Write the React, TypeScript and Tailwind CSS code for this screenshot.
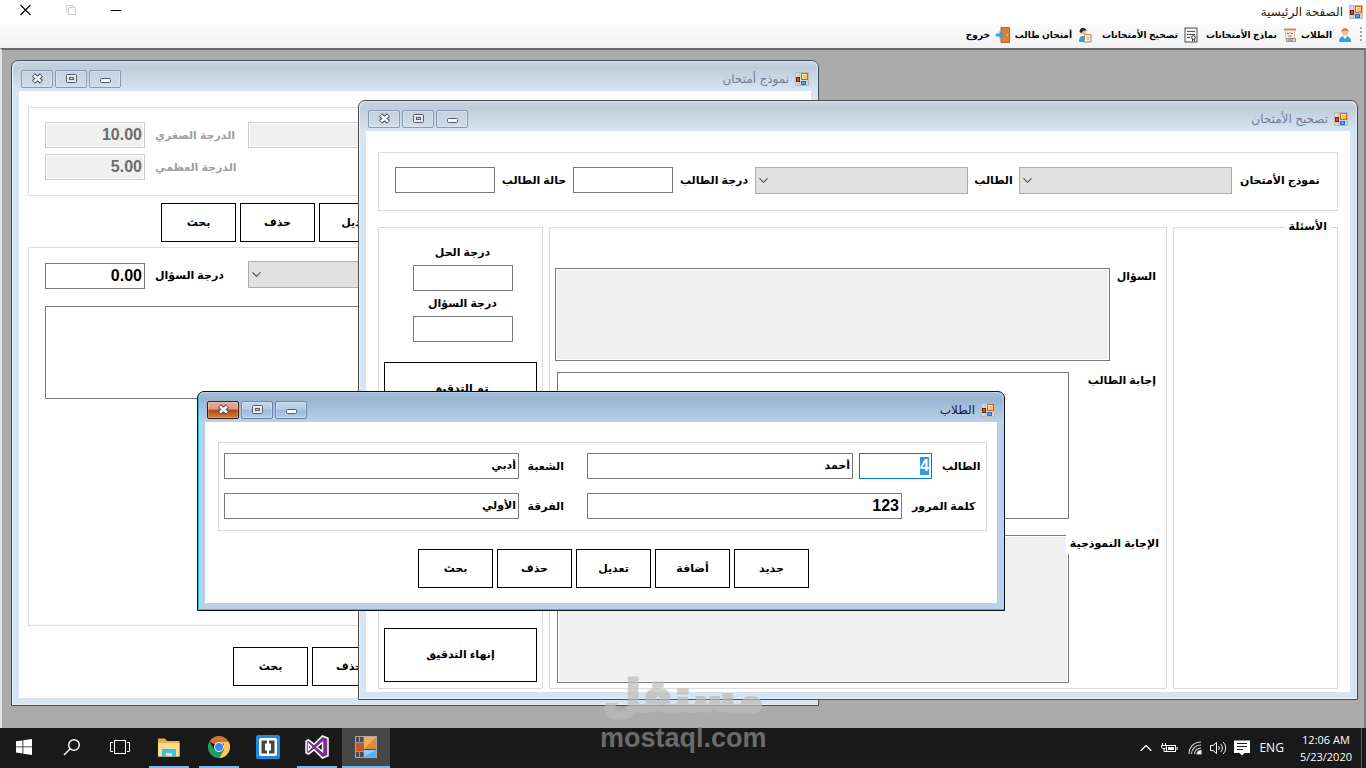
import { useEffect, useRef } from "react";
import type { ReactNode } from "react";
import { ChevronDown, ChevronUp } from "lucide-react";

const LABEL = "text-[11px] leading-4 font-bold whitespace-nowrap";
const BOX_BASE = "h-[26px] border px-[2px] text-base leading-5 font-bold outline-none";
const BOX = `${BOX_BASE} border-[#7a7a7a] bg-white`;
const DISABLED_BOX = `${BOX_BASE} border-[#ccc] bg-[#f0f0f0] text-[#6d6d6d] shadow-[inset_0_0_0_1px_#fff]`;
const ARABIC_BOX =
  "h-[26px] border border-[#7a7a7a] bg-white px-[2px] pb-[2px] text-[11px] leading-5 font-bold outline-none";
const AREA = "block resize-none border border-[#7a7a7a] outline-none";
const GREY_AREA = `${AREA} bg-[#f0f0f0] shadow-[inset_0_0_0_1px_#fff]`;

function FormIcon() {
  return (
    <svg width="14" height="14" viewBox="0 0 14 14" className="shrink-0" aria-hidden="true">
      <rect x="0.5" y="0.5" width="13" height="13" fill="#d3d6da" stroke="#bdb9b6" />
      <path d="M0.5 9.5h13M4.5 0.5v13" stroke="#bdbdbd" />
      <rect x="6.5" y="1.5" width="6" height="6" fill="#ffc04c" stroke="#c56a1c" />
      <path d="M7.5 6.5v-4h4" stroke="#ffe9ad" fill="none" />
      <rect x="1.5" y="5.5" width="3" height="4" fill="#d0502c" stroke="#7a1d0c" />
      <rect x="6.5" y="9.5" width="4" height="3" fill="#4ba6f2" stroke="#1b6fc4" />
    </svg>
  );
}

function CaptionButton({ kind, active }: { kind: "close" | "max" | "min"; active?: boolean }) {
  const names = { close: "إغلاق", max: "تكبير", min: "تصغير" };
  const look =
    kind === "close" && active
      ? "border-[#3c1f1a] bg-[linear-gradient(#e6aa98_0%,#dc9a84_45%,#a9480f_50%,#d8843a_100%)]"
      : active
        ? "border-[#6f84ad] bg-[linear-gradient(#c3d7ec_0%,#b4cce6_45%,#9cb8d8_50%,#b3cde8_100%)]"
        : "border-[#8c97b5] bg-[linear-gradient(#c5d1df,#d0dce9)]";
  return (
    <button
      type="button"
      aria-label={names[kind]}
      className={`flex h-[18px] w-8 items-center justify-center rounded-[2px] border shadow-[inset_0_0_0_1px_rgba(255,255,255,0.25)] ${look}`}
    >
      <svg width="13" height="11" viewBox="0 0 13 11" aria-hidden="true">
        {kind === "close" && (
          <>
            <path d="M2.500 2l8 7M10.500 2l-8 7" stroke="#4a5069" strokeWidth="4.600" />
            <path d="M3 2.500l7 6M10 2.500l-7 6" stroke="#fff" strokeWidth="2.400" />
          </>
        )}
        {kind === "max" && (
          <>
            <rect x="1.5" y="1.5" width="10" height="8" rx="1" fill="#e9e9e9" stroke="#555b6e" />
            <rect x="4.5" y="4.5" width="4" height="2" fill="#c9d5e3" stroke="#555b6e" />
          </>
        )}
        {kind === "min" && (
          <rect x="1.5" y="5.5" width="10" height="4" rx="1" fill="#fafafa" stroke="#555b6e" />
        )}
      </svg>
    </button>
  );
}

function MdiWindow({
  title,
  place,
  active,
  children,
}: {
  title: string;
  place: string;
  active?: boolean;
  children: ReactNode;
}) {
  const frame = active
    ? "border-[#111] bg-[#b9d1ea] shadow-[inset_1px_-1px_0_#2cc3e0]"
    : "border-[#4c4c4c] bg-[#d7e4f2] shadow-[inset_1px_-1px_0_#e9f1f9]";
  const bar = active
    ? "bg-[linear-gradient(#a3bdd9,#99b4d1_20%,#b9d1ea)]"
    : "bg-[linear-gradient(#c9d4e1,#bfcddb_20%,#d7e4f2)]";
  return (
    <section
      aria-label={title}
      className={`absolute flex flex-col rounded-t-[7px] border pb-[7px] ${frame} ${place}`}
    >
      <header className={`mx-px mt-px flex h-[29px] shrink-0 items-center rounded-t-[6px] px-2 pt-1 ${bar}`}>
        <FormIcon />
        <h2
          className={`mr-[6px] text-[12px] leading-4 ${active ? "text-[#17173a]" : "text-[#757a9a]"}`}
        >
          {title}
        </h2>
        <div className="mr-auto flex gap-[2px]">
          <CaptionButton kind="min" active={active} />
          <CaptionButton kind="max" active={active} />
          <CaptionButton kind="close" active={active} />
        </div>
      </header>
      <div className="mx-[7px] flex min-h-0 flex-1 flex-col overflow-hidden bg-white">{children}</div>
    </section>
  );
}

function ActionButton({ children }: { children: ReactNode }) {
  return (
    <button type="button" className={`h-[39px] w-[75px] border border-black bg-white pb-[2px] ${LABEL}`}>
      {children}
    </button>
  );
}

function Combo({ id, className, label }: { id: string; className: string; label?: string }) {
  return (
    <div className={`relative h-[27px] ${className}`}>
      <select
        id={id}
        aria-label={label}
        className="h-full w-full appearance-none border border-[#adadad] bg-[#e1e1e1] outline-none"
      />
      <ChevronDown
        className="pointer-events-none absolute top-[6px] left-[1px] size-[15px] text-[#555]"
        strokeWidth={1.8}
      />
    </div>
  );
}

function ExamModelWindow() {
  return (
    <MdiWindow title="نموذج أمتحان" place="left-[9px] top-[10px] w-[808px] h-[646px]">
      <div className="mx-[9px] mt-4 flex h-[89px] shrink-0 flex-col gap-[6px] border border-[#dcdcdc] px-4 pt-[14px]">
        <div className="flex items-center">
          <input aria-label="نموذج أمتحان" disabled className={`${DISABLED_BOX} min-w-0 flex-1`} />
          <label htmlFor="min-degree" className={`w-[103px] pl-[10px] text-left text-[#a0a0a0] ${LABEL}`}>
            الدرجة الصغري
          </label>
          <input
            id="min-degree"
            disabled
            defaultValue="10.00"
            className={`${DISABLED_BOX} w-[100px]`}
          />
        </div>
        <div className="flex items-center justify-end">
          <label htmlFor="max-degree" className={`w-[103px] pl-[10px] text-left text-[#a0a0a0] ${LABEL}`}>
            الدرجة العظمي
          </label>
          <input
            id="max-degree"
            disabled
            defaultValue="5.00"
            className={`${DISABLED_BOX} w-[100px]`}
          />
        </div>
      </div>
      <div className="mt-[7px] flex justify-end gap-1 pl-[142px]">
        <ActionButton>تعديل</ActionButton>
        <ActionButton>حذف</ActionButton>
        <ActionButton>بحث</ActionButton>
      </div>
      <div className="mx-[9px] mt-[5px] h-[379px] shrink-0 border border-[#dcdcdc] px-4 pt-[13px]">
        <div className="flex h-7 items-end">
          <Combo id="question-kind" label="السؤال" className="min-w-0 flex-1 self-start" />
          <label htmlFor="question-degree" className={`w-[103px] self-center pl-[10px] text-left ${LABEL}`}>
            درجة السؤال
          </label>
          <input id="question-degree" defaultValue="0.00" className={`${BOX} w-[100px]`} />
        </div>
        <textarea aria-label="نص السؤال" className={`${AREA} mt-[17px] h-[93px] w-full bg-white`} />
      </div>
      <div className="mt-[21px] flex justify-end gap-1 pl-[214px]">
        <ActionButton>حذف</ActionButton>
        <ActionButton>بحث</ActionButton>
      </div>
    </MdiWindow>
  );
}

function GradingWindow() {
  return (
    <MdiWindow title="تصحيح الأمتحان" place="left-[356px] top-[50px] w-[1000px] h-[600px]">
      <div className="mx-3 mt-[21px] flex h-[59px] shrink-0 border border-[#dcdcdc] px-4 pt-[14px]">
        <label htmlFor="exam-model" className={`min-w-0 flex-1 pt-[5px] pl-2 text-left ${LABEL}`}>
          نموذج الأمتحان
        </label>
        <Combo id="exam-model" className="w-[213px] shrink-0" />
        <label htmlFor="student" className={`w-[51px] shrink-0 pt-[5px] text-center ${LABEL}`}>
          الطالب
        </label>
        <Combo id="student" className="w-[213px] shrink-0" />
        <label htmlFor="student-degree" className={`w-[82px] shrink-0 pt-[5px] text-center ${LABEL}`}>
          درجة الطالب
        </label>
        <input id="student-degree" className={`${BOX} w-[100px] shrink-0`} />
        <label htmlFor="student-state" className={`w-[78px] shrink-0 pt-[5px] text-center ${LABEL}`}>
          حالة الطالب
        </label>
        <input id="student-state" className={`${BOX} w-[100px] shrink-0`} />
      </div>

      <div className="mx-3 mt-4 mb-[3px] flex min-h-0 flex-1 gap-[6px]">
        <fieldset className="relative w-[165px] border border-[#dcdcdc]">
          <legend className={`absolute -top-[10px] right-[6px] bg-white px-1 ${LABEL}`}>الأسئلة</legend>
        </fieldset>

        <div className="flex min-w-0 flex-1 flex-col border border-[#dcdcdc] pt-10">
          <div className="flex">
            <label htmlFor="question" className={`w-14 pr-[10px] ${LABEL}`}>
              السؤال
            </label>
            <textarea id="question" readOnly className={`${GREY_AREA} ml-[5px] h-[93px] min-w-0 flex-1`} />
          </div>
          <div className="mt-[11px] flex">
            <label htmlFor="student-answer" className={`w-[97px] pr-[10px] ${LABEL}`}>
              إجابة الطالب
            </label>
            <textarea
              id="student-answer"
              className={`${AREA} ml-[7px] h-[147px] min-w-0 flex-1 bg-white`}
            />
          </div>
          <div className="mt-4 flex">
            <label
              htmlFor="model-answer"
              className={`relative -ml-[3px] h-[19px] w-[100px] bg-white pr-[7px] ${LABEL}`}
            >
              الإجابة النموذجية
            </label>
            <textarea id="model-answer" readOnly className={`${GREY_AREA} ml-[7px] h-[148px] min-w-0 flex-1`} />
          </div>
        </div>

        <div className="flex w-[165px] flex-col border border-[#dcdcdc] px-[5px] pt-4 pb-[6px]">
          <div className="flex flex-col items-center pl-1">
            <label htmlFor="answer-degree" className={`mb-[5px] ${LABEL}`}>
              درجة الحل
            </label>
            <input id="answer-degree" className={`${BOX} w-[100px]`} />
            <label htmlFor="full-degree" className={`mt-1 mb-[5px] ${LABEL}`}>
              درجة السؤال
            </label>
            <input id="full-degree" className={`${BOX} w-[100px]`} />
          </div>
          <button type="button" className={`mt-5 h-[54px] border border-black bg-white pb-[2px] ${LABEL}`}>
            تم التدقيق
          </button>
          <button type="button" className={`mt-auto h-[54px] border border-black bg-white pb-[2px] ${LABEL}`}>
            إنهاء التدقيق
          </button>
        </div>
      </div>
    </MdiWindow>
  );
}

function StudentsWindow() {
  const codeRef = useRef<HTMLInputElement>(null);

  useEffect(() => {
    codeRef.current?.focus();
    codeRef.current?.select();
  }, []);

  return (
    <MdiWindow active title="الطلاب" place="left-[195px] top-[341px] w-[808px] h-[220px]">
      <div className="mt-5 mr-[10px] ml-[13px] flex h-[89px] shrink-0 flex-col gap-[14px] border border-[#dcdcdc] pt-[10px] pl-[5px]">
        <div className="flex items-center">
          <label htmlFor="code" className={`w-[54px] pl-[10px] text-left ${LABEL}`}>
            الطالب
          </label>
          <input
            id="code"
            ref={codeRef}
            defaultValue="4"
            className={`${BOX_BASE} w-[73px] border-[#0078d7] bg-white selection:bg-[#3297e2] selection:text-white`}
          />
          <input
            aria-label="اسم الطالب"
            defaultValue="أحمد"
            className={`mr-[6px] min-w-0 flex-1 ${ARABIC_BOX}`}
          />
          <label htmlFor="section" className={`w-[68px] pr-[23px] ${LABEL}`}>
            الشعبة
          </label>
          <input id="section" defaultValue="أدبي" className={`w-[295px] ${ARABIC_BOX}`} />
        </div>
        <div className="flex items-center">
          <label htmlFor="password" className={`w-[84px] pl-[10px] text-left ${LABEL}`}>
            كلمة المرور
          </label>
          <input id="password" defaultValue="123" className={`${BOX} min-w-0 flex-1`} />
          <label htmlFor="grade" className={`w-[68px] pr-[23px] ${LABEL}`}>
            الفرقة
          </label>
          <input id="grade" defaultValue="الأولي" className={`w-[295px] ${ARABIC_BOX}`} />
        </div>
      </div>
      <div className="mt-[18px] flex gap-1 pr-[188px]">
        <ActionButton>جديد</ActionButton>
        <ActionButton>أضافة</ActionButton>
        <ActionButton>تعديل</ActionButton>
        <ActionButton>حذف</ActionButton>
        <ActionButton>بحث</ActionButton>
      </div>
    </MdiWindow>
  );
}

function ToolItem({ width, icon, children }: { width: string; icon: ReactNode; children: ReactNode }) {
  return (
    <button type="button" className={`flex items-center gap-[6px] ${width}`}>
      <svg width="14" height="16" viewBox="0 0 14 16" className="shrink-0" aria-hidden="true">
        {icon}
      </svg>
      <span className="text-[9px] leading-4 font-bold whitespace-nowrap">{children}</span>
    </button>
  );
}

function Toolbar() {
  return (
    <nav className="flex h-[25px] shrink-0 items-center bg-[linear-gradient(#fcfcfc,#f1f1f1)] pr-[3px] pb-px">
      <svg width="3" height="16" viewBox="0 0 3 16" className="ml-2" aria-hidden="true">
        <path d="M0 1h2M0 5h2M0 9h2M0 13h2" stroke="#a6a6a6" strokeWidth="2" />
      </svg>
      <ToolItem
        width="w-[55px]"
        icon={
          <>
            <path d="M1 15c0-4 2-6 6-6s6 2 6 6z" fill="#27a9e0" />
            <path d="M5 9l2 3 2-3z" fill="#fff" />
            <circle cx="7" cy="5" r="3.4" fill="#f7c08f" />
            <path d="M3.5 5c0-5 7-5 7 0-2-2-5-2-7 0z" fill="#c77a3a" />
          </>
        }
      >
        الطلاب
      </ToolItem>
      <ToolItem
        width="w-[99px]"
        icon={
          <>
            <path d="M1 1.500h12v2H1z" fill="#c98d5b" />
            <path d="M2.500 3.500h9v8h-9z" fill="#f6efe6" stroke="#d5c3ae" />
            <path d="M4 6.500h2l1-1 1 1h2M5 9h4" stroke="#8b7b69" fill="none" />
            <path d="M3.500 11.500h9v3h-9z" fill="#e4d8cc" stroke="#9a8f88" />
            <path d="M5 13h5" stroke="#5b7fae" />
          </>
        }
      >
        نماذج الأمتحانات
      </ToolItem>
      <ToolItem
        width="w-[106px]"
        icon={
          <>
            <rect x="1" y="1" width="12" height="14" fill="#f7f7f7" stroke="#4c4c4c" />
            <path d="M3 4.500h8M3 7.500h8M3 10.500h3" stroke="#555" />
            <circle cx="9.5" cy="10.5" r="1.8" fill="#fff" stroke="#333" />
            <path d="M8.500 12v2.500M10.500 12v2.500" stroke="#333" />
          </>
        }
      >
        تصحيح الأمتحانات
      </ToolItem>
      <ToolItem
        width="w-[82px]"
        icon={
          <>
            <circle cx="5" cy="4.5" r="2.8" fill="#f0b98c" />
            <path d="M1.500 5c0-6 7-5 7-1-3-1-4 0-5 2z" fill="#2b2b2b" />
            <path d="M1 15c0-4 1-6 4-6s4 3 4 6z" fill="#2aa6d6" />
            <path d="M7 7l6 1v7H6z" fill="#fff" stroke="#a77c5b" />
            <path d="M8.500 10h3M8.500 12h3" stroke="#b58d70" />
          </>
        }
      >
        أمتحان طالب
      </ToolItem>
      <ToolItem
        width="w-[60px]"
        icon={
          <>
            <path d="M5 0.500h8.500v15H5z" fill="#d98236" stroke="#b5651f" />
            <circle cx="11.500" cy="8" r="0.800" fill="#ffe3b0" />
            <path d="M0 6.500h3.500V4l4 4-4 4V9.500H0z" fill="#3c9fe6" />
          </>
        }
      >
        خروج
      </ToolItem>
    </nav>
  );
}

function AppTitleBar() {
  return (
    <header className="flex h-[23px] shrink-0 items-center bg-white pr-[3px] pl-5">
      <FormIcon />
      <h1 className="mr-[6px] text-[12px] leading-4 text-[#222]">الصفحة الرئيسية</h1>
      <div className="mr-auto flex gap-[33px] pb-[3px]">
        <button type="button" aria-label="تصغير" className="flex w-3 items-center">
          <svg width="12" height="12" viewBox="0 0 12 12">
            <path d="M1 6.500h10" stroke="#000" />
          </svg>
        </button>
        <button type="button" aria-label="استعادة" className="flex w-3 items-center">
          <svg width="12" height="12" viewBox="0 0 12 12" fill="none" stroke="#ccc">
            <path d="M3.500 3.500h7v7h-7zM3.500 8.500h-2v-7h7v2" />
          </svg>
        </button>
        <button type="button" aria-label="إغلاق" className="flex w-3 items-center">
          <svg width="12" height="12" viewBox="0 0 12 12">
            <path d="M0.500 1l10 10M10.500 1l-10 10" stroke="#000" strokeWidth="1.100" />
          </svg>
        </button>
      </div>
    </header>
  );
}

function TaskButton({
  name,
  width,
  state,
  children,
}: {
  name: string;
  width: string;
  state?: "open" | "active";
  children: ReactNode;
}) {
  return (
    <button
      type="button"
      aria-label={name}
      className={`flex h-10 flex-col items-center ${width} ${state === "active" ? "bg-[#474745]" : ""}`}
    >
      <span className="flex h-[38px] items-center">{children}</span>
      {state && (
        <span className={`h-[2px] bg-[#76b9ed] ${state === "active" ? "w-full" : "w-10"}`} />
      )}
    </button>
  );
}

function Taskbar() {
  return (
    <footer dir="ltr" className="flex h-10 shrink-0 bg-[#191919] text-white">
      <TaskButton name="Start" width="w-12">
        <svg width="16" height="16" viewBox="0 0 16 16" fill="#fff">
          <path d="M0 2.300L6.500 1.400V7.500H0zM7.300 1.300L16 0v7.500H7.300zM0 8.300h6.500v6.200L0 13.600zM7.300 8.300H16V16l-8.700-1.300z" />
        </svg>
      </TaskButton>
      <TaskButton name="Search" width="w-12">
        <svg width="18" height="18" viewBox="0 0 18 18" fill="none" stroke="#fff" strokeWidth="1.400">
          <circle cx="11" cy="7" r="5.300" />
          <path d="M7.200 10.800L1 17" />
        </svg>
      </TaskButton>
      <TaskButton name="Task view" width="w-12">
        <svg width="20" height="14" viewBox="0 0 20 14" fill="none" stroke="#fff">
          <rect x="4.500" y="0.500" width="11" height="13" />
          <path d="M3 2.500H0.500v9H3M17 2.500h2.500v9H17" />
        </svg>
      </TaskButton>
      <TaskButton name="File Explorer" width="w-[50px]" state="open">
        <svg width="22" height="19" viewBox="0 0 22 19">
          <path d="M0 0.500h7l2 2.500h12.500v15.500H0z" fill="#e8b04a" />
          <path d="M0 5h21.500v13.500H0z" fill="#fbdc8c" />
          <path d="M4 18.500V11h14v7.500h-4V15H8v3.500z" fill="#35c1ea" />
        </svg>
      </TaskButton>
      <TaskButton name="Chrome" width="w-[49px]" state="open">
        <svg width="22" height="22" viewBox="0 0 22 22">
          <path d="M11 0a11 11 0 0 1 9.530 5.500H11L6.200 8.200 1.470 5.500A11 11 0 0 1 11 0z" fill="#cf7430" />
          <path d="M20.530 5.500A11 11 0 0 1 11 22l4.800-8.300L16 8l-5-2.500z" fill="#fcc957" />
          <path d="M1.470 5.500A11 11 0 0 0 11 22l4.800-8.300-4.800 2.300-4.800-2.300z" fill="#229c57" />
          <circle cx="11" cy="11" r="5" fill="#fff" />
          <circle cx="11" cy="11" r="4" fill="#3f8ae8" />
        </svg>
      </TaskButton>
      <TaskButton name="Brackets" width="w-[49px]">
        <svg width="24" height="24" viewBox="0 0 24 24">
          <rect width="24" height="24" rx="2" fill="#1f8ae0" />
          <rect x="3" y="3" width="18" height="18" rx="2" fill="#fff" />
          <path d="M5.500 5.500H11v3H9v7h2v3H5.500zM18.500 5.500H13v3h2v7h-2v3h5.500z" fill="#454545" />
        </svg>
      </TaskButton>
      <TaskButton name="Visual Studio" width="w-[50px]" state="open">
        <svg width="24" height="24" viewBox="0 0 24 24">
          <path
            fillRule="evenodd"
            d="M17.500 1L23 3.300v17.400L17.500 23 9 14.800 3.500 19 1 17.800V6.200L3.500 5 9 9.200zM17.500 7.500L12 12l5.500 4.500zM3.500 9v6l3-3z"
            fill="#7b2f8c"
            stroke="#fff"
            strokeWidth="1.500"
          />
        </svg>
      </TaskButton>
      <TaskButton name="الصفحة الرئيسية" width="w-12" state="active">
        <svg width="22" height="22" viewBox="0 0 22 22">
          <rect x="0.500" y="0.500" width="21" height="21" fill="#4a4a4a" stroke="#a8a8a8" />
          <path d="M4.500 1v20M1 6.500h8M1 15.500h20M9 1v20" stroke="#999" />
          <rect x="1" y="7" width="8" height="8" fill="#c4572a" />
          <rect x="9" y="1" width="12" height="12" fill="#e08a35" />
          <path d="M9 13V1h12z" fill="#f2ae55" />
          <rect x="9" y="14" width="12" height="7" fill="#5aaef5" />
          <path d="M9 21v-7h12z" fill="#8fcbfb" />
        </svg>
      </TaskButton>

      <div className="ml-auto flex items-center">
        <ChevronUp className="mr-[5px] size-5" strokeWidth={1.4} />
        <svg width="17" height="13" viewBox="0 0 17 13" fill="none" stroke="#fff" className="mr-[10px]">
          <rect x="5.500" y="3.500" width="9" height="6" />
          <path d="M7 5h6v3H7z" fill="#fff" stroke="none" />
          <path d="M16 5v3M1.500 1v2M4.500 1v2M0.500 3.500h5v2l-1.500 1h-2l-1.500-1zM3 6.500v3h2" />
        </svg>
        <svg width="14" height="14" viewBox="0 0 14 14" fill="none" stroke="#ddd" strokeWidth="1.100" className="mr-[8px]">
          <path d="M1 13C1 6 6 1 13 1M3.500 13c0-5 4-9 9.500-9M6.500 13c0-3.500 3-6 6.500-6" />
          <path d="M9 13c0-2 2-3.500 4-3.500V13z" fill="#fff" />
        </svg>
        <svg width="17" height="14" viewBox="0 0 17 14" fill="none" stroke="#fff" className="mr-[7px]">
          <path d="M0.500 4.500h2.500l3.500-3v11l-3.500-3H0.500z" />
          <path d="M8.500 5c1 1 1 3 0 4M10.500 3c2.500 2 2.500 6 0 8M13 1c3.500 3 3.500 9 0 12" />
        </svg>
        <svg width="16" height="16" viewBox="0 0 16 16" className="mr-[9px]">
          <path d="M0 0.500h16v12.500h-5.500L8 15.500 5.500 13H0z" fill="#fff" />
          <path d="M3 3.500h10M3 6.500h10M3 9.500h6" stroke="#191919" />
        </svg>
        <span className="mr-4 font-['Open_Sans',sans-serif] text-[12px] leading-4">ENG</span>
        <div className="mr-[9px] text-center font-['Open_Sans',sans-serif] text-[11px] leading-[17px]">
          <div>12:06 AM</div>
          <div>5/23/2020</div>
        </div>
        <div className="h-full w-[5px] border-l border-[#5a5a5a]" />
      </div>
    </footer>
  );
}

export default function App() {
  return (
    <div
      dir="rtl"
      className="relative flex h-screen flex-col overflow-hidden bg-white font-['Liberation_Sans','DejaVu_Sans',sans-serif] text-black"
    >
      <AppTitleBar />
      <Toolbar />
      <main
        dir="ltr"
        className="relative min-h-0 flex-1 overflow-hidden border-2 border-b-0 border-t-[#696969] border-r-[#7d7d7d] border-l-[#e3e3e3] bg-[#ababab]"
      >
        <div dir="rtl">
          <ExamModelWindow />
          <GradingWindow />
          <StudentsWindow />
        </div>
      </main>
      <Taskbar />
      <div
        dir="ltr"
        className="pointer-events-none absolute bottom-[14px] left-[600px] flex flex-col items-center"
      >
        <span className="text-[44px] leading-[52px] font-bold text-[#bcbcba] opacity-70 [-webkit-text-stroke:3px_#bcbcba]">
          مستقل
        </span>
        <span className="text-[27px] leading-8 font-bold text-[#8e8e8e] opacity-70">mostaql.com</span>
      </div>
    </div>
  );
}
